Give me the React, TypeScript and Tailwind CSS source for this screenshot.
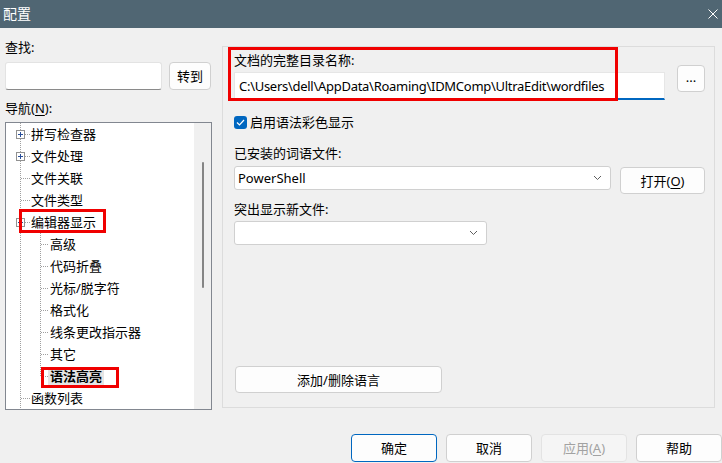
import React from "react";

type TreeNode = {
  label: string;
  level: 0 | 1;
  box?: "plus" | "minus";
  last?: boolean;
  selected?: boolean;
};

const nodes: TreeNode[] = [
  { label: "拼写检查器", level: 0, box: "plus" },
  { label: "文件处理", level: 0, box: "plus" },
  { label: "文件关联", level: 0 },
  { label: "文件类型", level: 0 },
  { label: "编辑器显示", level: 0, box: "minus" },
  { label: "高级", level: 1 },
  { label: "代码折叠", level: 1 },
  { label: "光标/脱字符", level: 1 },
  { label: "格式化", level: 1 },
  { label: "线条更改指示器", level: 1 },
  { label: "其它", level: 1 },
  { label: "语法高亮", level: 1, last: true, selected: true },
  { label: "函数列表", level: 0 },
];

const dot = { stroke: "#a0a0a0", strokeDasharray: "1 1" };

// connector lines + expand box for one tree row
function Gutter({ node }: { node: TreeNode }) {
  const w = node.level === 0 ? 25 : 44;
  return (
    <svg width={w} height={22} className="shrink-0" shapeRendering="crispEdges">
      <line x1={14.5} y1={0} x2={14.5} y2={22} {...dot} />
      {node.level === 0 && <line x1={15} y1={11.5} x2={24} y2={11.5} {...dot} />}
      {node.level === 1 && (
        <>
          <line x1={34.5} y1={0} x2={34.5} y2={node.last ? 12 : 22} {...dot} />
          <line x1={35} y1={11.5} x2={43} y2={11.5} {...dot} />
        </>
      )}
      {node.box && (
        <g>
          <rect x={10.5} y={7.5} width={8} height={8} fill="#fff" stroke="#919191" />
          <line x1={12} y1={11.5} x2={17} y2={11.5} stroke="#2a4f9a" />
          {node.box === "plus" && <line x1={14.5} y1={9} x2={14.5} y2={14} stroke="#2a4f9a" />}
        </g>
      )}
    </svg>
  );
}

function Chevron() {
  return (
    <svg width={9} height={6} viewBox="0 0 9 6" className="shrink-0">
      <path d="M1 1 L4.5 4.5 L8 1" fill="none" stroke="#5f5f5f" strokeWidth={1} />
    </svg>
  );
}

function Btn({
  children,
  className = "",
  primary = false,
  disabled = false,
}: {
  children: React.ReactNode;
  className?: string;
  primary?: boolean;
  disabled?: boolean;
}) {
  const tone = disabled
    ? "border-[#e3e3e3] bg-[#f5f5f5] text-[#a2a2a2]"
    : primary
    ? "border-[#0067c0] bg-[#fdfdfd] text-black"
    : "border-[#d0d0d0] bg-[#fdfdfd] text-black";
  return (
    <div className={`flex items-center justify-center rounded-[4px] border text-[13px] ${tone} ${className}`}>
      {children}
    </div>
  );
}

export default function App() {
  return (
    <div className="flex h-[463px] w-[722px] flex-col overflow-hidden bg-[#f0f0f0] font-['Noto_Sans','Noto_Sans_CJK_SC',sans-serif] text-[13px] leading-[18px] text-black">
      {/* title bar */}
      <div className="flex h-[28px] shrink-0 items-center justify-between bg-[#506673] pl-[3px] pr-[4px] text-white">
        <span className="text-[14px]">配置</span>
        <svg width={10} height={10} viewBox="0 0 10 10">
          <path d="M0.5 0.5 L9.5 9.5 M9.5 0.5 L0.5 9.5" stroke="#fff" strokeWidth={1} />
        </svg>
      </div>

      <div className="flex pl-[5px]">
        {/* left: search + navigation tree */}
        <div className="flex w-[207px] shrink-0 flex-col pt-[10px]">
          <div className="h-[18px]">查找:</div>
          <div className="mt-[6px] flex">
            <div className="h-[28px] w-[157px] rounded-[3px] border border-[#e3e3e3] border-b-[#8a8a8a] bg-white" />
            <Btn className="ml-[7px] h-[28px] w-[42px]">转到</Btn>
          </div>
          <div className="mt-[9px] h-[18px]">
            导航(<span className="underline underline-offset-2">N</span>):
          </div>
          <div className="relative mt-[5px] flex h-[288px] border border-[#828790] bg-white">
            <div className="flex min-w-0 flex-1 flex-col overflow-hidden">
              {nodes.map((n) => (
                <div key={n.label} className="flex h-[22px] shrink-0 items-center whitespace-nowrap">
                  <Gutter node={n} />
                  {n.selected ? (
                    <span className="ml-[-2px] bg-[#e5e5e5] px-[2px] font-bold">{n.label}</span>
                  ) : (
                    <span>{n.label}</span>
                  )}
                </div>
              ))}
            </div>
            <div className="flex w-[17px] shrink-0 justify-center bg-[#f0f0f0] pt-[39px]">
              <div className="h-[126px] w-[2px] rounded-full bg-[#858585]" />
            </div>
            {/* red highlight marks */}
            <div className="pointer-events-none absolute left-[13px] top-[86px] h-[24px] w-[87px] border-[3px] border-[#f00000]" />
            <div className="pointer-events-none absolute left-[35px] top-[244px] h-[21px] w-[78px] border-[3px] border-[#f00000]" />
          </div>
        </div>

        {/* right: settings group */}
        <div className="relative ml-[10px] mt-[18px] flex h-[362px] w-[493px] flex-col border border-[#dcdcdc] pl-[11px] pt-[4px]">
          <div className="flex items-start">
            <div className="flex w-[431px] flex-col">
              <div className="h-[18px]">文档的完整目录名称:</div>
              <div className="mt-[3px] flex h-[28px] items-center border border-[#e6e6e6] border-b-2 border-b-[#0067c0] bg-white pl-[4px] tracking-[-0.28px] whitespace-nowrap">
                C:\Users\dell\AppData\Roaming\IDMComp\UltraEdit\wordfiles
              </div>
            </div>
            <Btn className="ml-[12px] mt-[14px] h-[27px] w-[28px] pb-[4px] text-[12px]">...</Btn>
          </div>

          <div className="mt-[13px] flex h-[18px] items-center">
            <div className="flex h-[13px] w-[13px] items-center justify-center rounded-[3px] bg-[#0067c0]">
              <svg width={9} height={7} viewBox="0 0 9 7">
                <path d="M1 3.5 L3.5 6 L8 1" fill="none" stroke="#fff" strokeWidth={1.2} />
              </svg>
            </div>
            <span className="ml-[3px]">启用语法彩色显示</span>
          </div>

          <div className="mt-[13px] h-[18px]">已安装的词语文件:</div>
          <div className="mt-[4px] flex items-start">
            <div className="flex h-[24px] w-[377px] items-center justify-between rounded-[3px] border border-[#d0d0d0] bg-white pl-[3px] pr-[8px]">
              <span>PowerShell</span>
              <Chevron />
            </div>
            <Btn className="ml-[9px] mt-[1px] h-[27px] w-[85px]">
              打开(<span className="underline underline-offset-2">O</span>)
            </Btn>
          </div>

          <div className="mt-[6px] h-[18px]">突出显示新文件:</div>
          <div className="mt-[3px] flex h-[24px] w-[253px] items-center justify-end rounded-[3px] border border-[#d0d0d0] bg-white pr-[8px]">
            <Chevron />
          </div>

          <Btn className="ml-[1px] mt-[121px] h-[27px] w-[207px]">添加/删除语言</Btn>

          <div className="pointer-events-none absolute left-[5px] top-[0px] h-[54px] w-[390px] border-[3px] border-[#f00000]" />
        </div>
      </div>

      {/* dialog buttons */}
      <div className="mt-[24px] flex justify-end gap-[9px]">
        <Btn primary className="h-[28px] w-[86px]">确定</Btn>
        <Btn className="h-[28px] w-[86px]">取消</Btn>
        <Btn disabled className="h-[28px] w-[86px]">
          应用(<span className="underline underline-offset-2">A</span>)
        </Btn>
        <Btn className="h-[28px] w-[86px]">帮助</Btn>
      </div>
    </div>
  );
}
